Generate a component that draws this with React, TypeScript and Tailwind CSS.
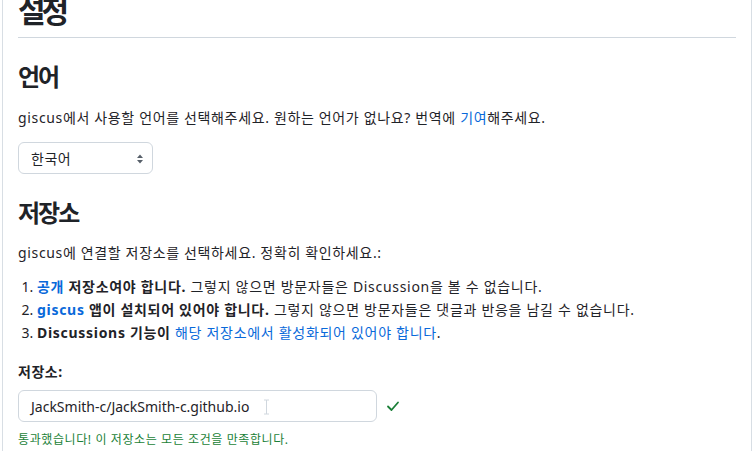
export default function App() {
  return (
    <div className="h-[460px] w-[753px] overflow-hidden bg-white font-['Noto_Sans','Noto_Sans_CJK_KR',sans-serif] text-[#1f2328]">
      <div className="ml-[2px] mr-[1px] h-full border-x border-[#d8dee4] px-[15px]">
        <h1 className="-mt-[9px] border-b border-[#d0d7de] pb-[6px] text-[30px] font-bold leading-[40px] tracking-[-4px]">설정</h1>

        <h2 className="mt-[24px] text-[24px] font-bold leading-[30px] tracking-[-2px]">언어</h2>
        <p className="mt-[15px] text-[14px] leading-[22px] tracking-[0.65px]">
          giscus에서 사용할 언어를 선택해주세요. 원하는 언어가 없나요? 번역에{" "}
          <a className="text-[#0969da]">기여</a>해주세요.
        </p>
        <div className="relative mt-[13px] flex h-[32px] w-[135px] items-center rounded-md border border-[#d0d7de] pl-[12px] text-[14px] tracking-[0.5px]">
          한국어
          <svg className="absolute right-[8px] top-[11px]" width="8" height="10" viewBox="0 0 8 10">
            <path d="M4 0.5 L7 4 H1 Z M4 9.5 L7 6 H1 Z" fill="#57606a" />
          </svg>
        </div>

        <h2 className="mt-[24px] text-[24px] font-bold leading-[30px] tracking-[-2px]">저장소</h2>
        <p className="mt-[14px] text-[14px] leading-[22px] tracking-[0.65px]">
          giscus에 연결할 저장소를 선택하세요. 정확히 확인하세요.:
        </p>
        <ol className="mt-[11px] list-decimal pl-[19px] text-[14px] leading-[23px]">
          <li>
            <span className="tracking-[0.7px]">
              <strong className="font-bold">
                <a className="text-[#0969da]">공개</a> 저장소여야 합니다.
              </strong>{" "}
              그렇지 않으면 방문자들은 Discussion을 볼 수 없습니다.
            </span>
          </li>
          <li>
            <span className="tracking-[0.7px]">
              <strong className="font-bold">
                <a className="text-[#0969da]">giscus</a> 앱이 설치되어 있어야 합니다.
              </strong>{" "}
              그렇지 않으면 방문자들은 댓글과 반응을 남길 수 없습니다.
            </span>
          </li>
          <li>
            <span className="tracking-[0.7px]">
              <strong className="font-bold">Discussions 기능이</strong>{" "}
              <a className="text-[#0969da]">해당 저장소에서 활성화되어 있어야 합니다</a>.
            </span>
          </li>
        </ol>

        <label className="mt-[17px] block text-[14px] font-bold leading-[22px] tracking-[0.5px]">저장소:</label>
        <div className="mt-[7px] flex items-center gap-[8px]">
          <div className="relative flex h-[32px] w-[359px] items-center rounded-md border border-[#d0d7de] pl-[12px] text-[14px]">
            JackSmith-c/JackSmith-c.github.io
            <svg className="absolute left-[244px] top-[8px]" width="7" height="16" viewBox="0 0 7 16">
              <path d="M1 1 H3.5 M3.5 1 H6 M3.5 1 V15 M1 15 H6" stroke="#d0d7de" strokeWidth="1" fill="none" />
            </svg>
          </div>
          <svg width="16" height="16" viewBox="0 0 16 16">
            <path d="M3 8.5 L6.5 12 L13 4.5" stroke="#1a7f37" strokeWidth="1.8" fill="none" strokeLinecap="round" strokeLinejoin="round" />
          </svg>
        </div>
        <p className="mt-[9px] text-[12px] leading-[18px] tracking-[0.6px] text-[#1a7f37]">통과했습니다! 이 저장소는 모든 조건을 만족합니다.</p>
      </div>
    </div>
  );
}
